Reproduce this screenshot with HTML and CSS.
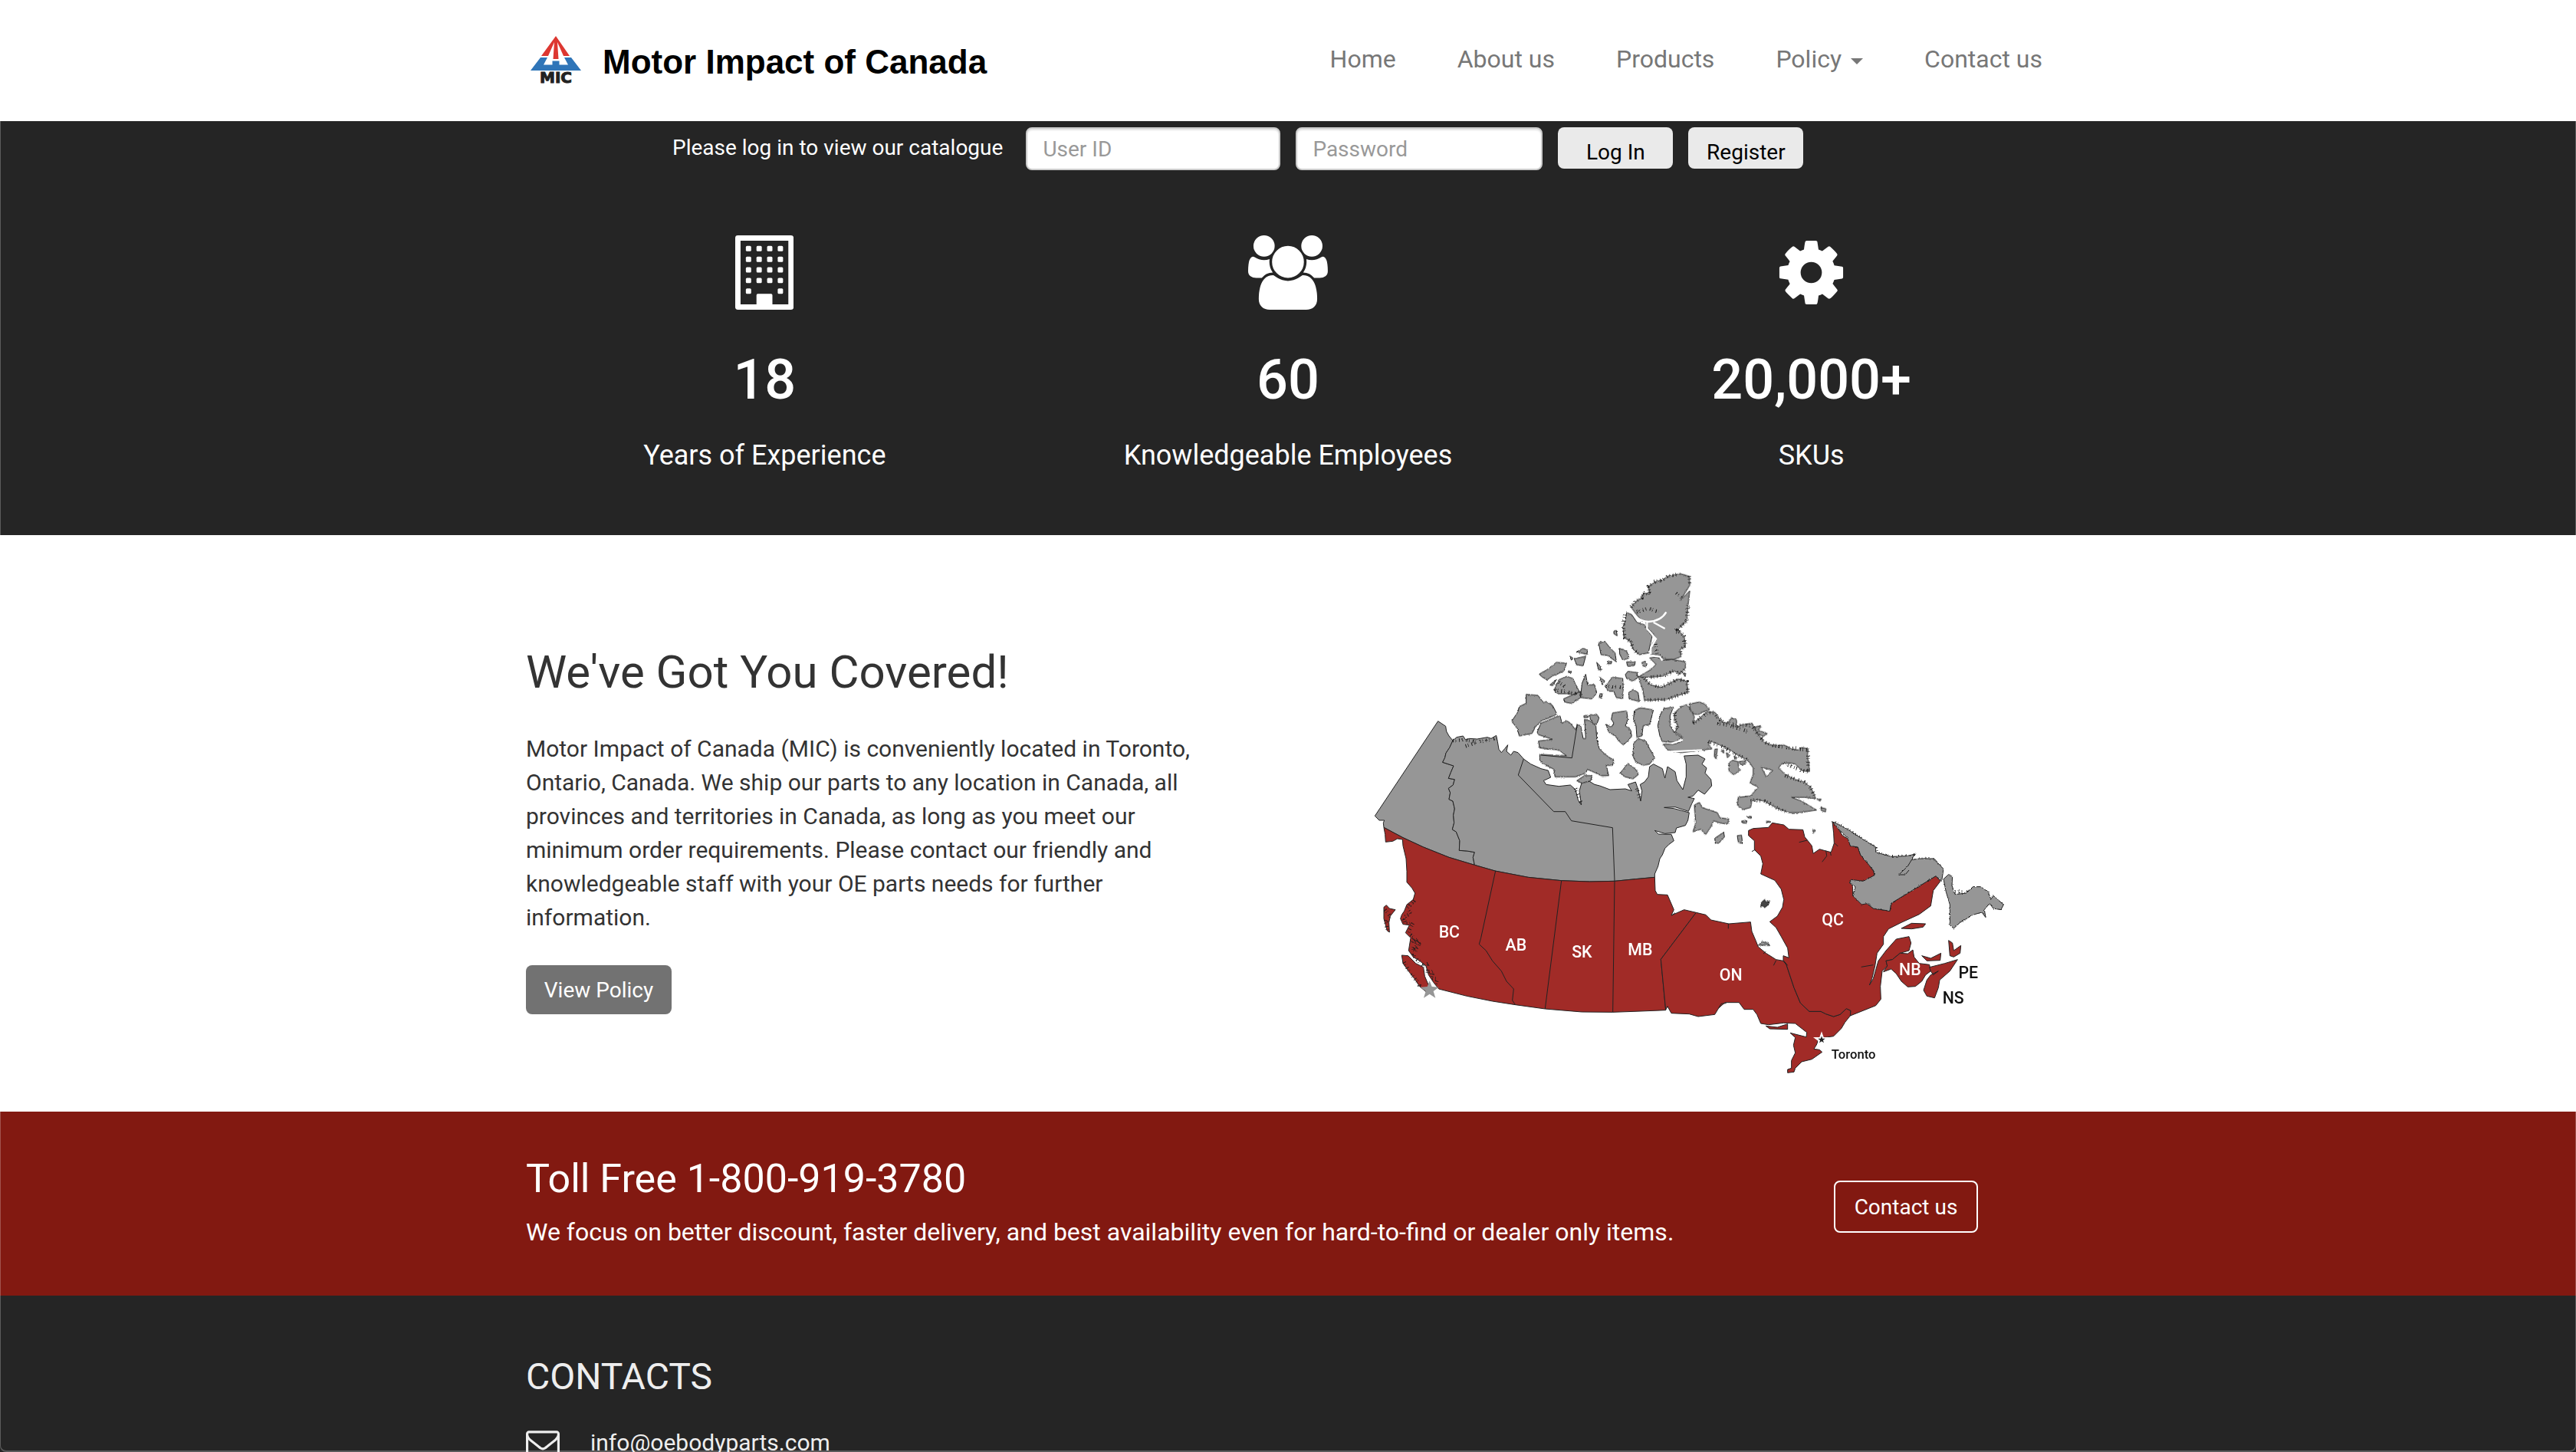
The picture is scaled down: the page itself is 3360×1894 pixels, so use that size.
FILE: index.html
```html
<!DOCTYPE html>
<html lang="en">
<head>
<meta charset="utf-8">
<meta name="viewport" content="width=device-width, initial-scale=1">
<title>Motor Impact of Canada</title>
<link rel="stylesheet" href="styles.css">
</head>
<body>
<div class="window">
<header class="site-header">
  <div class="container header-row">
    <a class="brand" href="#">
      <svg class="brand-mark" viewBox="0 0 66 60" aria-label="MIC logo">
        <path fill="#dd3731" d="M33 0 51 26H43L35 8 36.500 30H29.500L31 8 23 26H14z"/>
        <path fill="#2f75b8" d="M13 28H22L17 37.500H28.500V32.500H37.500V37.500H49L44 28H53L66 45H0z"/>
        <text class="brand-initials" x="33" y="61" text-anchor="middle">MIC</text>
      </svg>
      <span class="brand-name">Motor Impact of Canada</span>
    </a>
    <nav class="nav">
      <a href="#">Home</a>
      <a href="#">About us</a>
      <a href="#">Products</a>
      <a href="#">Policy<span class="caret"></span></a>
      <a href="#">Contact us</a>
    </nav>
  </div>
</header>

<section class="dark">
  <div class="container">
    <form class="login">
      <label class="login-label" for="user">Please log in to view our catalogue</label>
      <input class="field field-user" id="user" type="text" placeholder="User ID">
      <input class="field field-pass" id="pass" type="password" placeholder="Password" aria-label="Password">
      <button class="btn-light" type="button">Log In</button>
      <button class="btn-light" type="button">Register</button>
    </form>
  </div>
  <div class="container stats">
    <div class="stat">
      <svg class="stat-icon" viewBox="0 0 1408 1792" fill="#fff">
        <path fill-rule="evenodd" d="M64 0H1344Q1408 0 1408 64V1728Q1408 1792 1344 1792H64Q0 1792 0 1728V64Q0 0 64 0zM128 128V1664H512V1440Q512 1408 544 1408H864Q896 1408 896 1440V1664H1280V128z"/>
        <g id="floor"><rect x="256" y="256" width="128" height="128" rx="28"/><rect x="512" y="256" width="128" height="128" rx="28"/><rect x="768" y="256" width="128" height="128" rx="28"/><rect x="1024" y="256" width="128" height="128" rx="28"/></g>
        <use href="#floor" y="256"/><use href="#floor" y="512"/><use href="#floor" y="768"/>
        <rect x="256" y="1280" width="128" height="128" rx="28"/><rect x="1024" y="1280" width="128" height="128" rx="28"/>
      </svg>
      <strong class="stat-number">18</strong>
      <span class="stat-label">Years of Experience</span>
    </div>
    <div class="stat">
      <svg class="stat-icon" viewBox="0 0 1920 1792" fill="#fff"><path d="M593 896q-162 5-265 128h-134q-82 0-138-40.500t-56-118.500q0-353 124-353 6 0 43.500 21t97.500 42.500 119 21.500q67 0 133-23-5 37-5 66 0 139 81 256zm1071 637q0 120-73 189.500t-194 69.500h-874q-121 0-194-69.500t-73-189.500q0-53 3.500-103.500t14-109 26.500-108.500 43-97.500 62-81 85.500-53.500 111.500-20q10 0 43 21.500t73 48 107 48 135 21.500 135-21.500 107-48 73-48 43-21.500q61 0 111.500 20t85.500 53.500 62 81 43 97.500 26.500 108.500 14 109 3.500 103.500zm-1024-1277q0 106-75 181t-181 75-181-75-75-181 75-181 181-75 181 75 75 181zm704 384q0 159-112.500 271.500t-271.500 112.500-271.500-112.500-112.500-271.500 112.500-271.500 271.500-112.500 271.500 112.500 112.500 271.500zm576 225q0 78-56 118.500t-138 40.500h-134q-103-123-265-128 81-117 81-256 0-29-5-66 66 23 133 23 59 0 119-21.500t97.500-42.500 43.500-21q124 0 124 353zm-128-609q0 106-75 181t-181 75-181-75-75-181 75-181 181-75 181 75 75 181z"/></svg>
      <strong class="stat-number">60</strong>
      <span class="stat-label">Knowledgeable Employees</span>
    </div>
    <div class="stat">
      <svg class="stat-icon" viewBox="0 0 1792 1792" fill="#fff"><path d="M1152 896q0-106-75-181t-181-75-181 75-75 181 75 181 181 75 181-75 75-181zm512-109v222q0 12-8 23t-20 13l-185 28q-19 54-39 91 35 50 107 138 10 12 10 25t-9 23q-27 37-99 108t-94 71q-12 0-26-9l-138-108q-44 23-91 38-16 136-29 186-7 28-36 28h-222q-14 0-24.500-8.500t-11.500-21.500l-28-184q-49-16-90-37l-141 107q-10 9-25 9-14 0-25-11-126-114-165-168-7-10-7-23 0-12 8-23 15-21 51-66.500t54-70.500q-27-50-41-99l-183-27q-13-2-21-12.500t-8-23.500v-222q0-12 8-23t19-13l186-28q14-46 39-92-40-57-107-138-10-12-10-24 0-10 9-23 26-36 98.500-107.500t94.500-71.500q13 0 26 10l138 107q44-23 91-38 16-136 29-186 7-28 36-28h222q14 0 24.500 8.500t11.500 21.500l28 184q49 16 90 37l142-107q9-9 24-9 13 0 25 10 129 119 165 170 7 8 7 22 0 12-8 23-15 21-51 66.500t-54 70.500q26 50 41 98l183 28q13 2 21 12.500t8 23.500z"/></svg>
      <strong class="stat-number">20,000+</strong>
      <span class="stat-label">SKUs</span>
    </div>
  </div>
</section>

<section class="coverage">
  <div class="container coverage-row">
    <div class="coverage-text">
      <h2>We've Got You Covered!</h2>
      <p>Motor Impact of Canada (MIC) is conveniently located in Toronto, Ontario, Canada. We ship our parts to any location in Canada, all provinces and territories in Canada, as long as you meet our minimum order requirements. Please contact our friendly and knowledgeable staff with your OE parts needs for further information.</p>
      <button class="btn-gray" type="button">View Policy</button>
    </div>
    <svg class="map" viewBox="0 0 2520 2070" aria-label="Map of Canada">
      <defs>
        <filter id="coast" x="-5%" y="-5%" width="110%" height="110%">
          <feTurbulence type="fractalNoise" baseFrequency="0.13" numOctaves="2" seed="4" result="n"/>
          <feDisplacementMap in="SourceGraphic" in2="n" scale="8" xChannelSelector="R" yChannelSelector="G"/>
        </filter>
      </defs>
      <g class="land gray">
        <path d="M287 632 317 652 320 672 330 690 345 708 332 736 318 757 314 775 305 793 348 807 337 833 328 856 352 860 346 882 328 895 335 912 330 938 345 945 352 975 347 1000 350 1030 343 1056 358 1065 372 1100 370 1138 400 1140 430 1145 424 1165 430 1195 330 1165 230 1125 150 1088 75 1048 73 1030 77 1020 57 1020 40 1003z"/>
        <path d="M345 708 360 695 385 690 395 705 410 700 440 702 480 695 495 700 515 688 520 712 525 742 535 755 548 740 560 725 555 750 572 765 583 750 600 755 622 780 650 800 690 818 718 825 728 852 700 865 710 880 760 887 805 882 825 900 835 940 848 960 840 905 850 870 880 868 900 880 920 885 960 900 1020 897 1045 905 1030 880 1060 870 1070 900 1080 945 1085 905 1078 880 1095 870 1110 850 1115 810 1130 800 1165 818 1175 855 1185 810 1215 830 1222 865 1245 900 1258 850 1258 800 1250 768 1305 765 1332 780 1320 800 1338 815 1332 835 1355 860 1358 885 1330 918 1305 902 1285 925 1265 930 1290 935 1280 955 1267 985 1215 968 1172 970 1210 974 1270 990 1265 1020 1255 1040 1220 1050 1215 1068 1175 1072 1135 1060 1150 1074 1200 1075 1210 1100 1190 1115 1175 1130 1165 1155 1155 1170 1148 1200 1135 1230 1135 1243 1060 1250 978 1258 880 1260 770 1256 640 1243 510 1218 430 1195 424 1165 430 1145 400 1140 370 1138 372 1100 358 1065 343 1056 350 1030 347 1000 352 975 345 945 330 938 335 912 328 895 346 882 352 860 328 856 337 833 348 807 305 793 314 775 318 757 332 736z"/>
      </g>
      <g class="land gray" filter="url(#coast)">
        <path d="M632 527 678 531 700 560 710 555 735 570 753 605 720 620 690 632 668 655 655 680 605 690 597 660 575 633 600 595 605 575 632 562z"/>
        <path d="M690 640 750 615 765 612 772 640 790 630 805 640 825 665 832 645 845 650 855 700 865 700 862 650 860 625 880 630 905 650 908 700 918 740 945 765 975 785 970 805 945 805 955 845 925 845 872 820 865 835 825 850 745 850 740 820 700 800 685 785 685 762 790 768 760 745 685 737 680 710 735 703 680 685 675 675z"/>
        <path d="M945 645 965 655 975 640 965 625 970 600 1000 595 1025 592 1030 625 1020 650 1040 665 1045 690 1030 710 1012 725 1000 715 980 690 955 675z"/>
        <path d="M880 607H910L917 620 908 645 895 640 883 625z"/>
        <path d="M1055 590 1080 580 1130 588 1115 645 1090 650 1085 690 1065 695 1062 650 1052 625z"/>
        <path d="M1052 720 1070 700 1100 710 1115 740 1135 775 1115 800 1090 805 1060 790 1050 770z"/>
        <path d="M1000 835 1030 797 1060 820 1072 840 1050 858 1020 850z"/>
        <path d="M830 865 860 845H888L885 865 850 875z"/>
        <path d="M1208 577 1170 583 1155 610 1147 650 1155 690 1165 712 1215 715 1240 695 1215 680 1195 650V610z"/>
        <path d="M975 280 985 277 988 298 975 290zM915 325 940 320 960 345 980 365 985 400 950 375 925 372zM997 347 1025 358 1035 385 1010 393 998 370zM1025 400H1060L1055 415H1028zM1085 402 1097 399 1105 408 1100 420 1088 415zM950 400 967 398 965 407H950zM908 402 920 415 925 432 915 430zM828 362 855 347 872 353 870 370zM820 388 865 378 855 415 830 412zM803 378 815 385 810 394zM795 438 810 437 806 445zM858 610H875V618H858z"/>
        <path d="M683 448 715 430 750 402 790 405 780 435 760 445 735 455 715 470 695 460zM725 490 750 470 735 493zM740 510 760 470 790 457 815 465 828 495 840 515 825 528 790 525 755 525zM778 545 845 515V540L810 563 785 558zM850 485 865 448 872 490 900 490 908 520 890 545 845 540zM920 460 940 475 930 490zM940 495 970 460 1010 465 1012 510 1010 543 985 540 975 515 955 515zM920 525H930L928 542 918 540zM1020 450 1030 437 1065 442 1070 460 1050 475 1025 465zM1033 520 1050 508 1070 520 1075 555 1035 545z"/>
        <path d="M1025 207 1045 215 1065 245 1095 255 1110 280 1125 300 1118 330 1110 365 1075 372 1050 350 1040 320 1015 305 1010 265 1020 240z"/>
        <g transform="translate(1020 0)">
          <path d="M250 65 252 100 215 160 252 122 245 180 240 240 215 265 205 275 230 300 235 340 215 350 218 380 190 390 155 390 130 375 100 370 105 330 120 310 105 285 85 265 80 240 60 235 40 210 22 185 45 160 65 150 70 130 95 135 90 105 120 85 145 80 165 65 215 55z"/>
          <path d="M50 460 100 430 120 410 95 385 120 380 155 395 180 390 210 395 235 400V425L215 448 190 435 150 455 100 460z"/>
          <path d="M50 455 75 465 100 490 140 500 170 485 205 467 240 475 245 520 200 533 160 548 110 550 75 550 68 510z"/>
          <path d="M193 600 215 577 240 567 258 590 270 615 265 640 290 620 320 595 350 597 365 620 380 635 400 640 415 620 435 625V655L460 645 497 640 505 665 525 690 545 715 580 728 620 725 650 740 675 745 690 735 715 740 712 770 718 800 720 830 690 825 665 800 640 795 610 800 600 815 625 840 665 860 700 870 725 890 745 935 700 930 650 930 690 945 748 980 680 990 640 990 600 975 570 960 545 945 520 940 495 945 490 970 460 978 438 960 442 930 490 925 520 890 488 875 500 840V815L480 785 440 765 410 745 380 730 335 710 325 725 340 740 300 745 260 750 220 755 190 750 165 745 148 722 190 722 222 710 220 690 195 675 205 650 192 625z"/>
          <path d="M250 565 290 557 310 565 330 587 305 595 290 605 270 605 255 590zM505 655 530 650 520 668 555 680 540 692 515 680z"/>
          <path d="M405 795 420 785 440 790 447 825 425 842 405 828zM445 790 470 787V800L450 802zM350 742 360 740 355 780 348 770zM375 748 385 745V758zM395 755 410 765 400 775zM425 768 437 775 430 782z"/>
          <path d="M270 960 290 950 300 970 360 990 370 1010 405 1015 400 1035 370 1030 345 1022 335 1045 315 1075 295 1055 265 1065 275 1030z"/>
          <path d="M765 970 785 975 783 987 768 982zM750 938 766 937 762 945zM228 445 236 443 234 458z"/>
          <path class="water" d="M532 812 577 825 552 850z"/>
        </g>
        <g transform="translate(1140 930)">
          <path d="M230 160 265 137 268 155 245 180 232 178zM318 150 335 148 338 180 322 175zM335 93 355 90V102L338 100zM355 75H373V82L360 80zM430 94H445V98H430zM614 125 625 130 615 142zM400 578 415 565 440 572 445 580z"/>
          <path d="M412 412 425 400 430 410 445 405 440 420 425 432 418 425 410 430z" fill="#444"/>
        </g>
      </g>
      <g class="fjords" filter="url(#coast)">
        <path d="M1270 65 1272 100M1265 180 1260 240 1235 265 1225 275 1250 300 1255 340 1235 350 1238 380M1042 185 1065 160 1085 150 1090 130 1115 135 1110 105 1140 85 1165 80 1185 65 1235 55M1138 330 1145 375 1175 390M1018 215 1012 265 1018 305 1040 320 1052 350 1075 370M1065 205 1110 190 1150 205M1220 130 1240 150M1220 280 1240 285"/>
        <path d="M1120 460 1170 455 1210 435 1235 448 1255 425M1095 465 1120 490 1160 500 1190 485 1225 467 1262 478 1265 518 1180 548 1095 550"/>
        <path d="M1212 600 1215 625 1225 650 1215 675M1285 640 1310 625 1340 600 1370 600 1385 625 1420 640 1455 650 1480 648 1515 650 1545 692 1565 715 1600 728 1670 738 1735 745 1735 830 1710 825 1640 797M1380 640 1430 650 1500 672M1645 845 1720 870 1745 892 1765 935M1510 940 1565 945 1620 975 1660 990M1345 712 1400 732 1460 765 1500 785"/>
        <path d="M345 708 395 705 440 715 515 700M395 730 440 715M745 510 830 525M760 480 790 500M945 495 1010 500M825 895 848 955M1065 895 1080 945"/>
        <path d="M1840 1030 1895 1060 1955 1100 2000 1130 2005 1150 2060 1163 2120 1160M2170 1172 2225 1175 2262 1212M2300 1300 2360 1300 2410 1285 2440 1310 2450 1340M2460 1325 2490 1350"/>
      </g>
      <g class="channel">
        <path d="M1036 190Q1062 240 1110 243 1160 240 1180 205M1105 243V270L1140 310 1120 345V370M1130 245 1175 270M1120 375 1155 380 1165 395M1200 720 1245 705M1185 752 1320 745"/>
      </g>
      <g class="land red" transform="translate(0 990)">
        <path d="M75 58 80 85 82 115 110 112 128 102 148 105 150 130 162 180 165 230V272L185 295 197 315 190 340 165 360 155 385 145 400 140 415 150 437 175 440 160 470 180 490 172 540 190 565 215 580 240 600 250 635 270 665 290 690 400 718 500 738 590 752 706 768 850 780 971 781 1080 777 1178 773 1159 574 1297 391 1250 380 1200 402 1210 380 1185 322 1145 320 1137 305 1135 253 1060 260 978 268 880 270 770 266 640 253 510 228 430 205 330 175 230 135 150 98z"/>
        <path d="M75 370 85 362 97 375 120 380 100 405 95 430 97 468 88 462 75 415zM145 558 170 560 200 590 230 605 235 640 252 680 245 705 215 680 195 650 175 625 150 590z"/>
        <path class="border" d="M512 228 455 490 448 515 475 540 500 580 535 620 555 660 583 690 578 735 590 752M770 266 706 768M978 268 971 781"/>
        <path class="border" d="M622-210 601-147 740-4 785-4 809 32 970 59 978 268M832-345 811-214 690-225"/>
      </g>
      <g class="fjords" filter="url(#coast)">
        <path d="M195 1335 165 1365 180 1385 150 1400 160 1425 190 1420 170 1460 195 1480 185 1500 210 1485 185 1530 215 1500 190 1550 230 1590 250 1580 245 1620 270 1610 260 1640 285 1640 275 1670M155 1575 175 1615 205 1650 215 1670M80 1370 100 1395 82 1420 90 1460"/>
      </g>
      <g transform="translate(1140 930)">
        <g class="land red">
          <path d="M157 451 195 460 215 480 285 495 370 488 375 525 390 560 400 585 430 610 470 635 498 640 510 655 540 745 565 805 600 838 645 838 665 848 695 858 720 850 745 827 762 835 760 855 740 880 725 905 695 935 660 940 635 945 630 965 618 985 640 988 650 997 610 1025 570 1035 545 1060 540 1075 515 1078V1065L530 1060V1030L545 1000 538 970 545 940 525 922 588 938 590 920 545 885 500 883 440 890 410 885 395 850 380 830 345 830 325 803 270 803 245 825 230 850 165 858 130 848 60 845 45 818 38 832 19 634z"/>
          <path d="M430 895 475 900 515 887V908L445 906z"/>
          <path d="M498 640V620L520 628 515 590 490 545 470 510 445 487 475 465 495 430 500 400 490 360 465 325 410 300 418 260 410 230 385 205V170L362 150V130L380 122 440 118 455 100 500 108 520 125 575 127 582 155 610 190 615 220 640 203 665 210 685 215 697 180 695 140 690 95 705 110 730 150 755 165 760 190 790 195 800 225 830 260 855 295 850 315 810 328 760 325 770 350V385L810 405 850 435 915 445 920 415 1095 308 1113 328 1085 365 1075 425 1030 458 960 490 910 515 890 545V575L865 610 857 660 845 710 835 735 850 710 870 640 900 600 940 555 990 545 998 570 990 600 955 610 925 635 900 640 905 660 885 680 878 740 880 790 860 815 760 855 762 835 745 827 720 850 695 858 665 848 645 838 600 838 565 805 540 745 510 655z"/>
          <path d="M900 640 925 635 955 610 985 612 1005 597 1010 625 1030 650 1070 655 1075 680 1055 695 1040 720 1015 740 985 742 960 720 940 690 920 672 890 683 905 660z"/>
          <path d="M1070 665 1130 650 1180 635 1150 680 1110 715 1105 745 1090 785 1060 778 1047 755 1060 715 1075 695 1105 680 1085 695 1075 680zM1145 560 1160 570 1165 600 1193 580 1190 610 1165 625 1150 620zM1040 620 1075 630 1115 610 1112 638 1060 640zM960 513 1000 493 1055 495 1045 508 1000 515z"/>
          <path class="border" d="M560 176 592 168M283 495V514M650 253 668 230 665 208M682 215 685 228M700 180 712 192M803 664 850 656M460 658 470 638M500 640 515 658M420 612 430 604M62 462 75 452M245 825 255 808 275 806M375 212 388 205"/>
        </g>
        <g class="land gray" filter="url(#coast)">
          <path d="M690 95 750 125 810 165 860 195V215L920 232 980 230 1015 222 1000 245 1030 240 1085 240 1125 280 1118 328 1095 308 920 415 915 445 850 435 830 415 805 420 770 385 780 350 757 335 765 322 810 328 855 305 850 285 800 225 790 195 760 190 750 160 725 135 705 115z"/>
          <path d="M1125 320 1145 302 1160 310 1158 345 1170 380 1215 375 1240 350 1270 350 1300 370 1310 400 1320 385 1360 420 1350 440 1320 435 1305 415 1285 440 1290 470 1275 450 1240 460 1190 490 1165 513 1150 500V420L1135 370z"/>
          <path class="border" d="M1012 225 985 270 950 303H975L990 285"/>
        </g>
        <path class="star-white" d="M648 916 656 939 681 939 661 954 668 979 648 964 628 979 635 954 615 939 640 939z"/>
        <path fill="#222" d="M648 934 651.500 944 662 944 653.500 951 657 961 648 955 639 961 642.500 951 634 944 644.500 944z"/>
        <g class="map-label">
          <text x="293" y="717">ON</text><text x="692" y="500">QC</text><text x="994" y="697">NB</text>
          <text class="ink" x="1222" y="708">PE</text><text class="ink" x="1163" y="808">NS</text>
          <text class="ink city" x="773" y="1023">Toronto</text>
        </g>
      </g>
      <path fill="#969696" d="M254 1648 263 1671 290 1673 269 1689 277 1715 254 1700 231 1715 239 1689 218 1673 245 1671z"/>
      <g class="map-label">
        <text x="331" y="1478">BC</text><text x="592" y="1530">AB</text><text x="850" y="1558">SK</text><text x="1078" y="1547">MB</text>
      </g>
    </svg>
  </div>
</section>

<section class="callout">
  <div class="container callout-row">
    <div>
      <h3>Toll Free 1-800-919-3780</h3>
      <p>We focus on better discount, faster delivery, and best availability even for hard-to-find or dealer only items.</p>
    </div>
    <button class="btn-outline" type="button">Contact us</button>
  </div>
</section>

<footer class="footer">
  <div class="container">
    <h4>CONTACTS</h4>
    <a class="contact" href="#">
      <svg class="contact-icon" viewBox="0 0 1792 1792" fill="#eee"><path d="M1664 1504v-768q-32 36-69 66-268 206-426 338-51 43-83 67t-86.500 48.500-102.500 24.500h-2q-48 0-102.500-24.500t-86.500-48.500-83-67q-158-132-426-338-37-30-69-66v768q0 13 9.500 22.500t22.500 9.500h1472q13 0 22.500-9.500t9.500-22.500zm0-1051v-24.500l-.5-13-3-12.500-5.500-9-9-7.500-14-2.500h-1472q-13 0-22.500 9.500t-9.500 22.500q0 168 147 284 193 152 401 317 6 5 35 29.500t46 37.500 44.500 31.500 50.500 27.500 43 9h2q20 0 43-9t50.500-27.500 44.500-31.500 46-37.500 35-29.500q208-165 401-317 54-43 100.500-115.500t46.500-131.500zm128-37v1088q0 66-47 113t-113 47h-1472q-66 0-113-47t-47-113v-1088q0-66 47-113t113-47h1472q66 0 113 47t47 113z"/></svg>
      info@oebodyparts.com
    </a>
  </div>
</footer>
</div>
</body>
</html>
```

FILE: styles.css
```css
* { box-sizing: border-box; }

body {
  margin: 0;
  background: #fff;
  color: #333;
  font-family: Roboto, "Liberation Sans", sans-serif;
  font-size: 30px;
  line-height: 44px;
}

h2, h3, h4, p { margin: 0; font-weight: 400; }
a { color: inherit; text-decoration: none; }
button, input { font-family: inherit; font-size: 28px; }
svg { display: block; flex: none; }

.window {
  height: 100vh;
  overflow-y: auto;
  scrollbar-width: none;
}

/* thin edge of the application window */
.window::after {
  content: "";
  position: fixed;
  inset: 0;
  border: solid rgba(255, 255, 255, 0.25);
  border-width: 0 1px 2px;
  border-radius: 0 0 8px 8px;
  pointer-events: none;
}

.container {
  max-width: 2048px;
  margin: 0 auto;
  padding: 0 30px;
}

/* header */
.header-row {
  display: flex;
  justify-content: space-between;
  align-items: flex-start;
  height: 158px;
  padding: 47px 40px 0 36px;
}
.brand { display: flex; gap: 28px; }
.brand-mark { width: 66px; height: 60px; overflow: visible; }
.brand-initials { font: bold 20px "DejaVu Sans", sans-serif; fill: #222; stroke: #222; }
.brand-name {
  font: bold 44px/68px "Liberation Sans", Arial, sans-serif;
  color: #000;
}
.nav {
  display: flex;
  gap: 80px;
  font-size: 32px;
  line-height: 60px;
  color: #777;
}
.caret {
  display: inline-block;
  margin-left: 12px;
  vertical-align: middle;
  border: solid transparent;
  border-width: 8px 8px 0;
  border-top-color: #777;
}

/* login and figures */
.dark {
  background: #252525;
  color: #fff;
  padding: 8px 0 84px;
}
.login {
  display: flex;
  gap: 20px;
  align-items: flex-start;
  padding-left: 191px;
}
.login-label { margin-right: 10px; font-size: 28px; line-height: 54px; }
.field {
  height: 56px;
  padding: 0 20px;
  border: 2px solid #ccc;
  border-radius: 8px;
  background: #fff;
  box-shadow: inset 0 2px 2px rgba(0, 0, 0, 0.1);
}
.field::placeholder { color: #999; opacity: 1; }
.field-user { width: 332px; }
.field-pass { width: 322px; }
.btn-light {
  width: 150px;
  height: 54px;
  padding: 10px 0 0;
  border: 0;
  border-radius: 8px;
  background: #eaeaea;
  color: #000;
}
.stats {
  display: grid;
  grid-template-columns: repeat(3, 1fr);
  padding: 85px 0 0;
}
.stat { display: flex; flex-direction: column; align-items: center; }
.stat-icon { height: 97px; }
.stat-number {
  margin-top: 52px;
  font-size: 72px;
  font-weight: 500;
  line-height: 80px;
}
.stat-label { margin-top: 38px; font-size: 36px; line-height: 40px; }

/* coverage */
.coverage { padding: 32px 0 30px; }
.coverage-row { display: flex; gap: 194px; }
.coverage-text { width: 900px; padding-top: 114px; }
.coverage h2 { font-size: 60px; line-height: 66px; }
.coverage p { margin: 45px 0 40px; }
.btn-gray {
  width: 190px;
  height: 64px;
  border: 0;
  border-radius: 8px;
  background: #727272;
  color: #fff;
}
.map { width: 840px; height: 690px; }
.land path { stroke: #222; stroke-width: 3; stroke-linejoin: round; }
.gray { fill: #969696; }
.red { fill: #a12b27; }
.land .border { fill: none; }
.land .water { fill: #fff; }
.fjords { fill: none; stroke: #1c1c1c; stroke-width: 14; stroke-dasharray: 3 7 2 12 3 9 2 16; }
.channel { fill: none; stroke: #fff; stroke-width: 7; }
.star-white { fill: #fff; }
.map-label {
  font-size: 64px;
  font-weight: 500;
  text-anchor: middle;
  fill: #fff;
}
.ink { fill: #111; }
.city { font-size: 50px; }

/* phone callout */
.callout { background: #821911; color: #fff; padding: 59px 0 61px; }
.callout-row {
  display: flex;
  justify-content: space-between;
  align-items: flex-end;
  padding-right: 124px;
}
.callout h3 { font-size: 52px; line-height: 58px; }
.callout p { margin-top: 18px; font-size: 32px; }
.btn-outline {
  width: 188px;
  height: 68px;
  margin-bottom: 21px;
  border: 2px solid #fff;
  border-radius: 8px;
  background: transparent;
  color: #fff;
}

/* footer */
.footer { background: #252525; color: #eee; padding: 80px 0 60px; }
.footer h4 { font-size: 48px; line-height: 52px; }
.contact { display: flex; gap: 40px; margin-top: 38px; }
.contact-icon { width: 44px; height: 44px; }
```
